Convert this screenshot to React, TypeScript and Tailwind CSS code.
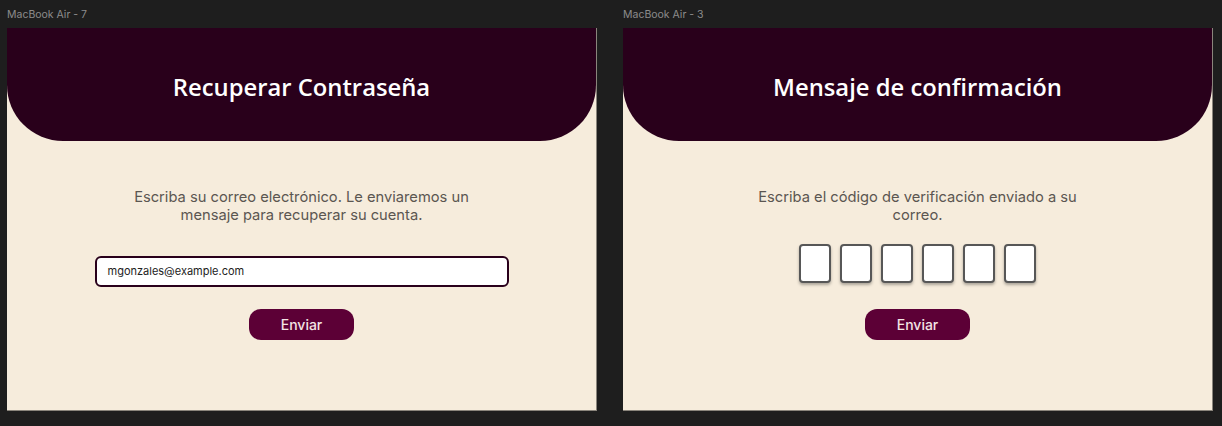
export default function App() {
  const frames = [
    { label: 'MacBook Air - 7', title: 'Recuperar Contraseña', kind: 'email' },
    { label: 'MacBook Air - 3', title: 'Mensaje de confirmación', kind: 'code' },
  ];

  return (
    <div className="flex h-[426px] w-[1222px] gap-[26px] overflow-hidden bg-[#1e1e1e] pl-[7px] font-['Inter',sans-serif]">
      {frames.map((f) => (
        <div key={f.label} className="flex flex-col">
          <div className="h-[28px] pt-[8px] text-[10.5px] leading-[14px] text-[#8c8c8c]">
            {f.label}
          </div>
          <div className="flex h-[383px] w-[590px] flex-col items-center border-r border-b border-[#8a857c] bg-[#f6ecdc]">
            <div className="flex h-[113px] w-full shrink-0 items-center justify-center rounded-b-[56px] bg-[#29001b] pt-[6px]">
              <h1 className="font-['Open_Sans',sans-serif] text-[23.8px] font-semibold text-white">
                {f.title}
              </h1>
            </div>

            {f.kind === 'email' ? (
              <>
                <p className="mt-[47px] w-[350px] text-center text-[14.7px] leading-[18px] text-[#5b5651]">
                  Escriba su correo electrónico. Le enviaremos un mensaje para recuperar su cuenta.
                </p>
                <div className="mt-[32px] flex h-[31px] w-[414px] items-center rounded-[6px] border-2 border-[#29001b] bg-white pl-[11px] text-[11px] text-[#222]">
                  mgonzales@example.com
                </div>
                <button
                  type="button"
                  className="mt-[22px] h-[31px] w-[105px] rounded-[12px] bg-[#5c0036] text-[14px] font-medium text-[#f3e4e4]"
                >
                  Enviar
                </button>
              </>
            ) : (
              <>
                <p className="mt-[47px] w-[330px] text-center text-[14.7px] leading-[18px] text-[#5b5651]">
                  Escriba el código de verificación enviado a su correo.
                </p>
                <div className="mt-[20px] flex gap-[9px]">
                  {[0, 1, 2, 3, 4, 5].map((i) => (
                    <div
                      key={i}
                      className="h-[39px] w-[32px] rounded-[4px] border-2 border-[#575757] bg-white shadow-[0_2px_3px_rgba(0,0,0,0.3)]"
                    />
                  ))}
                </div>
                <button
                  type="button"
                  className="mt-[26px] h-[31px] w-[105px] rounded-[12px] bg-[#5c0036] text-[14px] font-medium text-[#f3e4e4]"
                >
                  Enviar
                </button>
              </>
            )}
          </div>
        </div>
      ))}
    </div>
  );
}
